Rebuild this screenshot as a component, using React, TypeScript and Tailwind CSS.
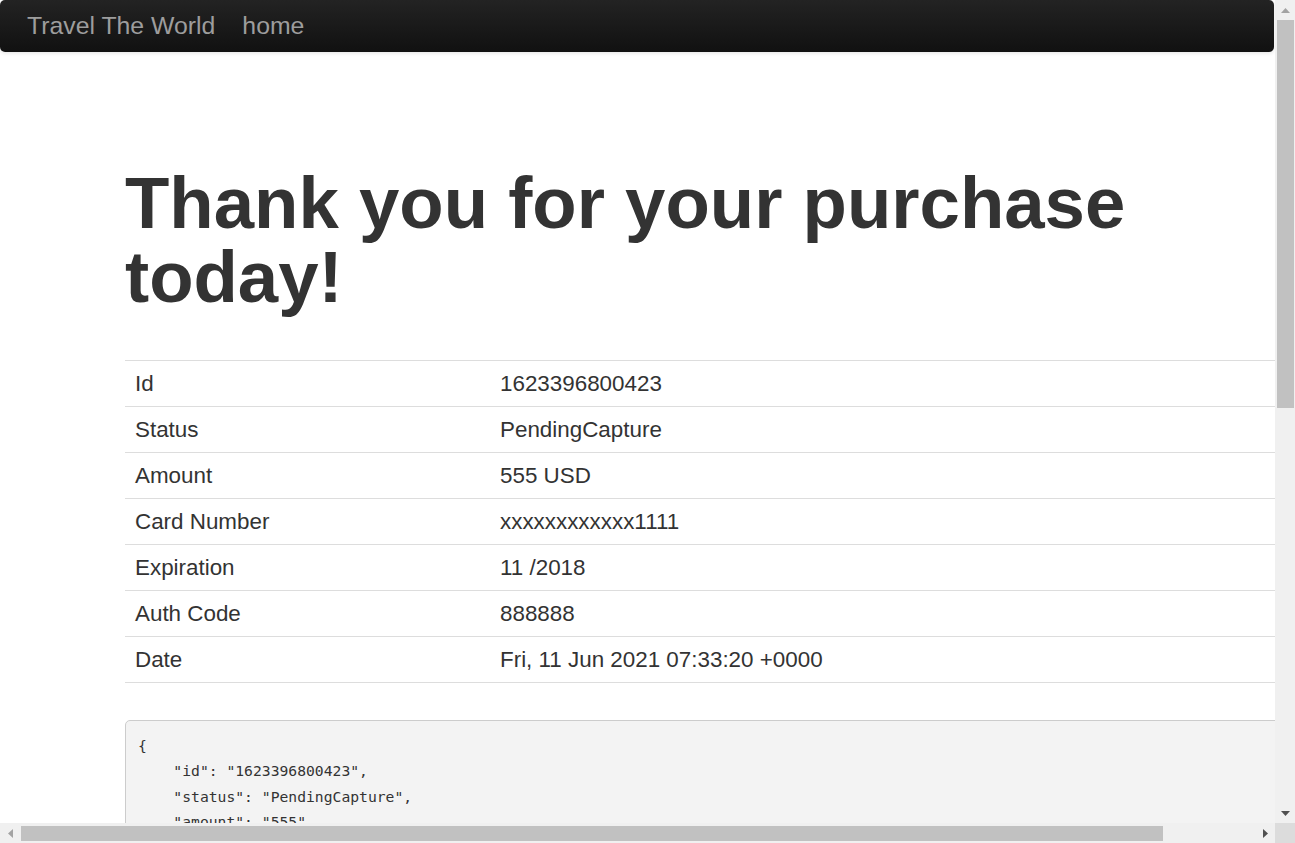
const rows: [string, string][] = [
  ["Id", "1623396800423"],
  ["Status", "PendingCapture"],
  ["Amount", "555 USD"],
  ["Card Number", "xxxxxxxxxxxx1111"],
  ["Expiration", "11 /2018"],
  ["Auth Code", "888888"],
  ["Date", "Fri, 11 Jun 2021 07:33:20 +0000"],
];

const json = `{
    "id": "1623396800423",
    "status": "PendingCapture",
    "amount": "555",
    "currency": "USD",
    "authCode": "888888"
}`;

function Arrow({ dir, dark }: { dir: "up" | "down" | "left" | "right"; dark?: boolean }) {
  const fill = dark ? "#505050" : "#a3a3a3";
  const points = {
    up: "0,5 4.5,0 9,5",
    down: "0,0 9,0 4.5,5",
    left: "5,0 5,9 0,4.5",
    right: "0,0 5,4.5 0,9",
  }[dir];
  const vertical = dir === "up" || dir === "down";
  return (
    <svg width={vertical ? 9 : 5} height={vertical ? 5 : 9} viewBox={vertical ? "0 0 9 5" : "0 0 5 9"}>
      <polygon points={points} fill={fill} />
    </svg>
  );
}

export default function App() {
  return (
    <div className="flex h-[843px] w-[1295px] flex-col overflow-hidden bg-white font-['Liberation_Sans',Arial,sans-serif] text-[#333]">
      <div className="flex min-h-0 flex-1">
        <div className="w-[1275px] overflow-hidden">
          <nav className="flex h-[52px] w-[1274px] items-center rounded-[5px] bg-linear-to-b from-[#232323] to-[#111111] pl-[27px] text-[24.8px] text-[#9d9d9d] shadow-[0_1px_4px_rgba(0,0,0,0.12)]">
            <span>Travel The World</span>
            <span className="ml-[27px]">home</span>
          </nav>

          <main className="w-[1400px] pl-[125px]">
            <h1 className="mt-[114px] w-[1150px] text-[72.6px] font-bold leading-[74px]">
              Thank you for your purchase today!
            </h1>

            <div className="mt-[46px] border-b border-[#ddd] text-[22.4px]">
              {rows.map(([label, value]) => (
                <div key={label} className="flex h-[46px] items-center border-t border-[#ddd]">
                  <div className="w-[365px] pl-[10px]">{label}</div>
                  <div className="pl-[10px]">{value}</div>
                </div>
              ))}
            </div>

            <pre className="mt-[37px] rounded-[5px] border border-[#ccc] bg-[#f3f3f3] px-[12px] py-[12px] font-['DejaVu_Sans_Mono',monospace] text-[14.7px] leading-[25.3px] text-[#333]">
              {json}
            </pre>
          </main>
        </div>

        <div className="flex w-[20px] flex-col items-center bg-[#f0f0f0]">
          <div className="flex h-[20px] items-center justify-center pl-[1px]">
            <Arrow dir="up" />
          </div>
          <div className="h-[388px] w-[17px] bg-[#c1c1c1]" />
          <div className="flex-1" />
          <div className="flex h-[20px] items-center justify-center pl-[1px]">
            <Arrow dir="down" dark />
          </div>
        </div>
      </div>

      <div className="flex h-[20px]">
        <div className="flex w-[1275px] items-center bg-[#f0f0f0]">
          <div className="flex w-[21px] justify-center">
            <Arrow dir="left" />
          </div>
          <div className="h-[15px] w-[1142px] bg-[#c1c1c1]" />
          <div className="flex-1" />
          <div className="flex w-[20px] justify-center">
            <Arrow dir="right" dark />
          </div>
        </div>
        <div className="w-[20px] bg-[#dcdcdc]" />
      </div>
    </div>
  );
}
